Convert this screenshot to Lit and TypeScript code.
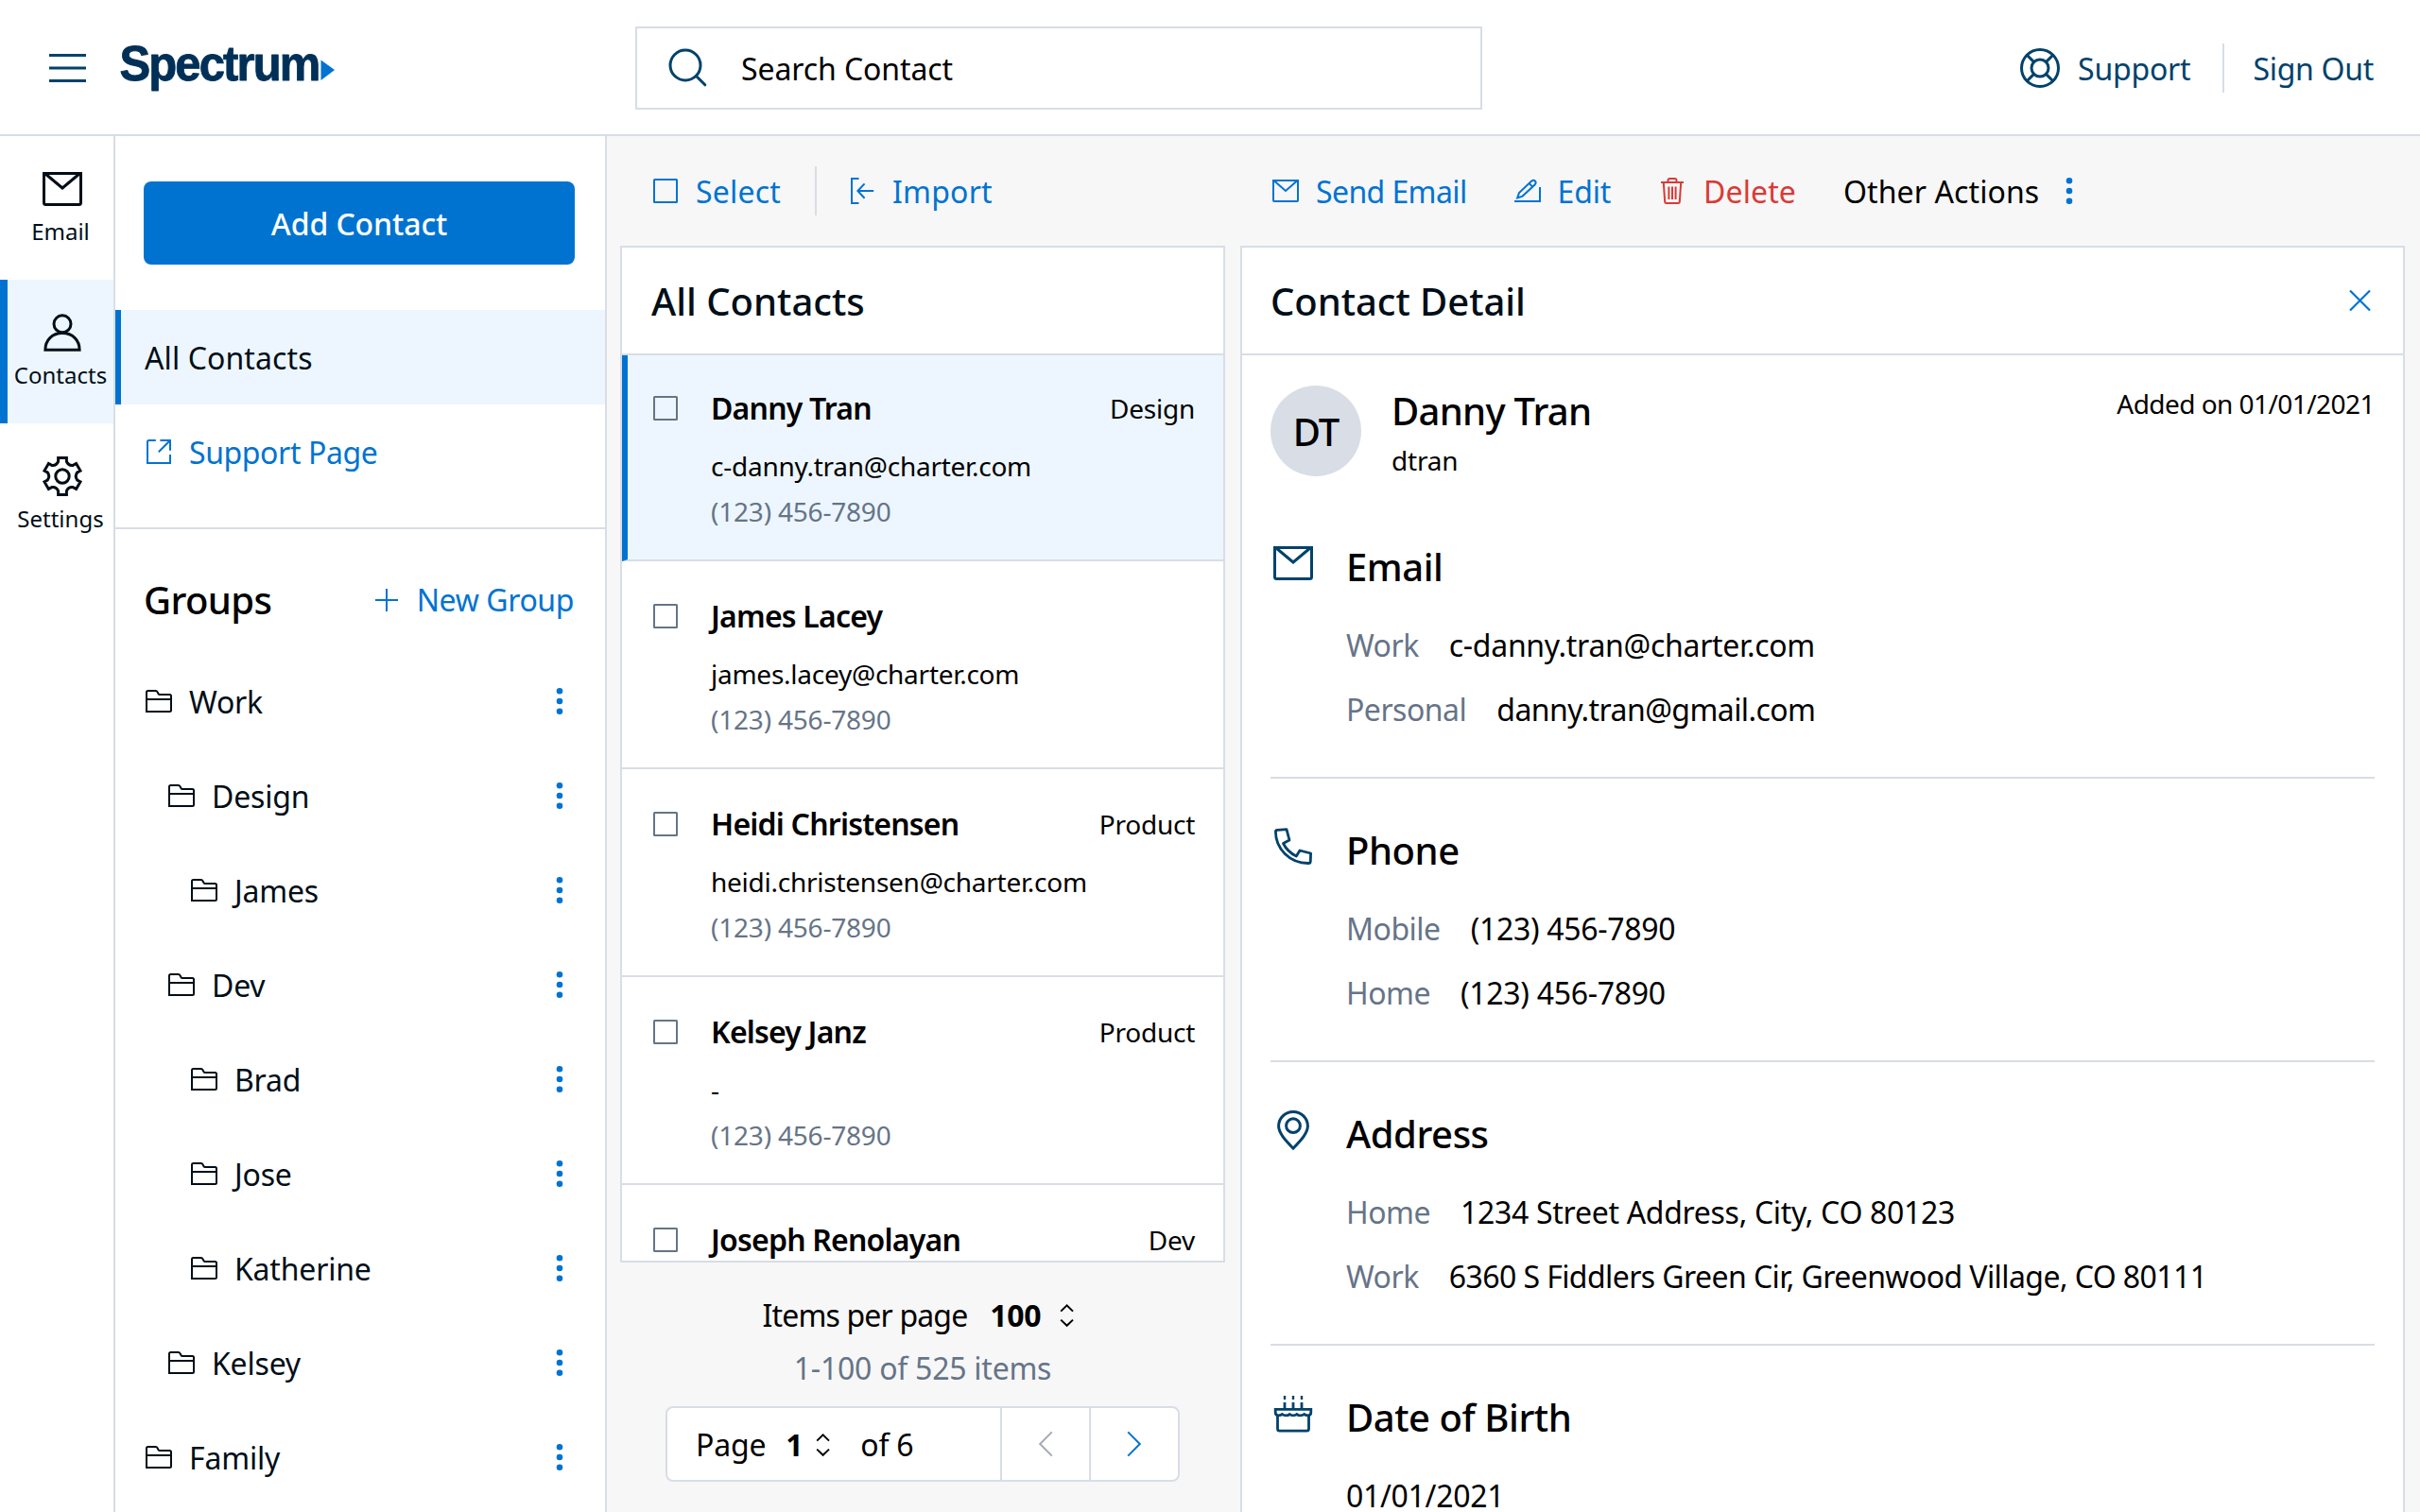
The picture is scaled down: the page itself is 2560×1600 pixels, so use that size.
import { LitElement, html, css, svg, nothing, type TemplateResult } from "lit";
import { customElement, property } from "lit/decorators.js";
import { classMap } from "lit/directives/class-map.js";

/** Outline of a six-toothed gear with concave arcs between the teeth. */
function gearPath(): string {
  const point = (angle: number, along: number, across: number) => {
    const x = 24 + along * Math.cos(angle) - across * Math.sin(angle);
    const y = 24 + along * Math.sin(angle) + across * Math.cos(angle);
    return `${x.toFixed(2)} ${y.toFixed(2)}`;
  };
  let d = "";
  for (let k = 0; k < 6; k++) {
    const a = -Math.PI / 2 + (k * Math.PI) / 3;
    d += k === 0 ? `M${point(a, 15.6, -4.4)}` : `A6.6 6.6 0 0 0 ${point(a, 15.6, -4.4)}`;
    d += `L${point(a, 19.4, -4.4)}L${point(a, 19.4, 4.4)}L${point(a, 15.6, 4.4)}`;
  }
  return `${d}A6.6 6.6 0 0 0 ${point(-Math.PI / 2, 15.6, -4.4)}Z`;
}

interface Glyph {
  box: number;
  stroke: number;
  art: TemplateResult<2>;
}

const glyphs: Record<string, Glyph> = {
  menu: { box: 48, stroke: 3, art: svg`<path d="M4 10.5H43M4 24H43M4 37.5H43"/>` },
  search: { box: 48, stroke: 3, art: svg`<circle cx="21" cy="21" r="16"/><path d="M32.5 32.5 41.8 41.8" stroke-linecap="round"/>` },
  lifebuoy: {
    box: 48,
    stroke: 3,
    art: svg`<circle cx="24" cy="24" r="19.5"/><circle cx="24" cy="24" r="9"/><path d="M10.5 10.5 17.6 17.6M37.5 10.5 30.4 17.6M10.5 37.5 17.6 30.4M37.5 37.5 30.4 30.4"/>`,
  },
  mail: { box: 48, stroke: 3, art: svg`<path d="M4.5 7.5H43.5V38.5Q43.5 40.5 41.5 40.5H6.5Q4.5 40.5 4.5 38.5Z"/><path d="M5.5 7.5 24 23 42.5 7.5"/>` },
  person: { box: 48, stroke: 3, art: svg`<circle cx="24" cy="14.8" r="9"/><path d="M5.9 42.2C5.9 32 13 24.6 24 24.6S42.1 32 42.1 42.2Z"/>` },
  gear: { box: 48, stroke: 3, art: svg`<path d=${gearPath()}/><circle cx="24" cy="24" r="7.2"/>` },
  phone: {
    box: 48,
    stroke: 2.8,
    art: svg`<path stroke-linejoin="round" d="M7 6.3 17 5.6 20 17 13.5 20.5Q18 29.5 27.3 34L31 28 42.6 31 42.3 39.5Q42.1 41.5 40 41.5C20 41.3 5.5 26 5.4 8Q5.4 6.5 7 6.3Z"/>`,
  },
  pin: { box: 48, stroke: 3, art: svg`<path d="M24 43.2C15.5 34.5 8.6 27 8.6 19.6A15.4 15.1 0 0 1 39.4 19.6C39.4 27 32.5 34.5 24 43.2Z"/><circle cx="24" cy="19.2" r="7.4"/>` },
  cake: {
    box: 48,
    stroke: 2.8,
    art: svg`<path d="M15 5V9M24 5V9M33 5V9" stroke-width="2.4"/><path d="M15 12V19M24 12V19M33 12V19"/><path d="M5.2 19.4H42.8V22.5Q42.8 25.8 39.4 25.8 36.8 25.8 35.6 24.6 34 25.8 31.6 25.8 29.2 25.8 27.8 24.6 26.2 25.8 24 25.8 21.8 25.8 20.2 24.6 18.8 25.8 16.4 25.8 14 25.8 12.4 24.6 11.2 25.8 8.6 25.8 5.2 25.8 5.2 22.5Z"/><path d="M7.5 25V40Q7.5 42.2 9.7 42.2H38.3Q40.5 42.2 40.5 40V25"/>`,
  },
  mailSmall: { box: 32, stroke: 2, art: svg`<path d="M3 5H29V26Q29 27 28 27H4Q3 27 3 26Z"/><path d="M3.5 5 16 16 28.5 5"/>` },
  external: { box: 32, stroke: 2, art: svg`<path d="M12.8 4H5.5Q4 4 4 5.5V28H28V19"/><path d="M17.4 4H28V14.8M28 4 15.8 16.2"/>` },
  plus: { box: 24, stroke: 2, art: svg`<path d="M12 0V24M0 12H24"/>` },
  folder: { box: 32, stroke: 2, art: svg`<path d="M3 27V6.5Q3 5 4.5 5H12.6Q14 5 14.5 6.2L15.6 8.2Q16 9 17 9H27.5Q29 9 29 10.5V25.5Q29 27 27.5 27ZM3 14H29"/>` },
  box: { box: 32, stroke: 2, art: svg`<rect x="4" y="4" width="24" height="24" rx="0.5"/>` },
  import: { box: 32, stroke: 2, art: svg`<path d="M12.5 3H5V29H12.5M11.5 16H28.2M18.6 8.4 11.4 16 18.6 23.8"/>` },
  edit: { box: 32, stroke: 2, art: svg`<path d="M2 27H29V12M5.2 23.4 7 18 20.2 5.6Q22.2 4 23.9 5.5 25.4 7.2 23.8 9.2L10.6 21.6ZM17.6 8 21.2 11.6"/>` },
  trash: { box: 32, stroke: 2, art: svg`<path d="M4 7H28M11.5 7V5Q11.5 3 13.5 3H18.5Q20.5 3 20.5 5V7M6.8 7 8.2 27.6Q8.3 29 9.7 29H22.3Q23.7 29 23.8 27.6L25.2 7M12.4 11.5V25M16 11.5V25M19.6 11.5V25"/>` },
  dots: { box: 32, stroke: 0, art: svg`<g fill="currentColor" stroke="none"><circle cx="16" cy="5.2" r="3.3"/><circle cx="16" cy="16" r="3.3"/><circle cx="16" cy="26.8" r="3.3"/></g>` },
  close: { box: 32, stroke: 2.2, art: svg`<path d="M6 5.5 27 26.5M27 5.5 6 26.5"/>` },
  updown: { box: 32, stroke: 2, art: svg`<path d="M9.2 11.6 15.6 5.4 22 11.6M9.2 20.6 15.6 26.8 22 20.6"/>` },
  left: { box: 32, stroke: 2, art: svg`<path d="M22.8 3.4 10.2 16 22.8 28.6"/>` },
  right: { box: 32, stroke: 2, art: svg`<path d="M9.2 3.4 21.8 16 9.2 28.6"/>` },
};

const icon = (name: string) => {
  const g = glyphs[name];
  return html`<svg class="icon" width=${g.box} height=${g.box} viewBox="0 0 ${g.box} ${g.box}" fill="none"
    stroke="currentColor" stroke-width=${g.stroke} aria-hidden="true">${g.art}</svg>`;
};

const base = css`
  :host {
    --blue: #0073d1;
    --navy: #00426b;
    --line: #d8dde6;
    --tint: #edf6fe;
    --muted: #667488;
    --ink: #000e18;
    display: block;
    box-sizing: border-box;
    font-family: "Noto Sans", sans-serif;
    font-size: 32px;
    letter-spacing: -0.2px;
    white-space: nowrap;
    color: #000;
  }
  * {
    box-sizing: border-box;
  }
  .icon {
    display: block;
    flex: none;
  }
  h2,
  h3 {
    margin: 0;
    font-size: 40px;
    font-weight: 500;
    letter-spacing: 0;
  }
`;

@customElement("app-header")
export class AppHeader extends LitElement {
  static styles = [
    base,
    css`
      :host {
        display: grid;
        grid-template-columns: 672px 896px 1fr;
        align-items: center;
        height: 144px;
        border-bottom: 2px solid var(--line);
        background: #fff;
        color: var(--navy);
      }
      .brand {
        display: flex;
        align-items: center;
        gap: 28px;
        padding-left: 48px;
        padding-top: 2px;
      }
      .logo {
        display: block;
        overflow: visible;
      }
      .search {
        display: flex;
        align-items: center;
        gap: 32px;
        height: 88px;
        margin-top: 2px;
        padding-left: 30px;
        border: 2px solid var(--line);
      }
      .search span {
        color: #000;
        letter-spacing: -0.1px;
      }
      .links {
        display: flex;
        align-items: center;
        justify-content: flex-end;
        padding: 2px 49px 0 0;
      }
      .support {
        display: flex;
        align-items: center;
        gap: 16px;
        padding-right: 34px;
      }
      .out {
        display: flex;
        align-items: center;
        height: 52px;
        padding-left: 30px;
        border-left: 2px solid var(--line);
        letter-spacing: -0.3px;
      }
    `,
  ];

  render() {
    return html`
      <div class="brand">
        ${icon("menu")}
        <svg class="logo" width="236" height="64" viewBox="0 0 236 64">
          <text x="2.5" y="45" textLength="211" lengthAdjust="spacingAndGlyphs" fill="#003057" stroke="#003057"
            stroke-width="0.9" stroke-linejoin="round" font-family="Liberation Sans, Arial, sans-serif"
            font-size="52" font-weight="700" letter-spacing="-2">Spectrum</text>
          <path d="M215.5 23.5 230 34 215.5 45Z" fill="#0073d1" />
        </svg>
      </div>
      <div class="search">${icon("search")}<span>Search Contact</span></div>
      <nav class="links">
        <span class="support">${icon("lifebuoy")}<span>Support</span></span>
        <span class="out">Sign Out</span>
      </nav>
    `;
  }
}

@customElement("nav-rail")
export class NavRail extends LitElement {
  static styles = [
    base,
    css`
      :host {
        width: 122px;
        border-right: 2px solid var(--line);
        background: #fff;
        color: var(--ink);
        font-size: 24px;
        letter-spacing: 0;
      }
      .item {
        display: flex;
        flex-direction: column;
        align-items: center;
        gap: 3px;
        height: 152px;
        padding: 32px 0 0 8px;
      }
      .item .icon {
        margin-left: 4px;
      }
      .label {
        line-height: 36px;
      }
      .item.active {
        padding-left: 0;
        border-left: 8px solid var(--blue);
        background: var(--tint);
      }
    `,
  ];

  private items = [
    { icon: "mail", label: "Email" },
    { icon: "person", label: "Contacts", active: true },
    { icon: "gear", label: "Settings" },
  ];

  render() {
    return this.items.map(
      (i) => html`<div class=${classMap({ item: true, active: !!i.active })}>
        ${icon(i.icon)}<span class="label">${i.label}</span>
      </div>`,
    );
  }
}

@customElement("group-panel")
export class GroupPanel extends LitElement {
  static styles = [
    base,
    css`
      :host {
        width: 520px;
        border-right: 2px solid var(--line);
        background: #fff;
        color: var(--ink);
      }
      .add {
        display: flex;
        align-items: center;
        justify-content: center;
        height: 88px;
        margin: 48px 32px 48px 30px;
        border-radius: 8px;
        background: var(--blue);
        color: #fff;
        font-weight: 500;
        letter-spacing: -0.1px;
      }
      .row {
        display: flex;
        align-items: center;
        gap: 16px;
        height: 100px;
        padding: 0 32px 0 30px;
      }
      .row.active {
        padding-left: 25px;
        border-left: 6px solid var(--blue);
        background: var(--tint);
        letter-spacing: 0.1px;
      }
      .row.link,
      .new,
      .more {
        color: var(--blue);
      }
      .links {
        padding-bottom: 30px;
        border-bottom: 2px solid var(--line);
      }
      .link {
        letter-spacing: -0.4px;
      }
      .head {
        display: flex;
        align-items: center;
        justify-content: space-between;
        height: 132px;
        padding: 17px 33px 0 30px;
      }
      .head h2 {
        color: #000;
        letter-spacing: -0.6px;
      }
      .new {
        display: flex;
        align-items: center;
        gap: 20px;
        letter-spacing: -0.4px;
      }
      .more {
        margin-left: auto;
      }
      .row.depth-1 {
        padding-left: 54px;
      }
      .row.depth-2 {
        padding-left: 78px;
      }
    `,
  ];

  private groups: [string, number][] = [
    ["Work", 0],
    ["Design", 1],
    ["James", 2],
    ["Dev", 1],
    ["Brad", 2],
    ["Jose", 2],
    ["Katherine", 2],
    ["Kelsey", 1],
    ["Family", 0],
  ];

  render() {
    return html`
      <div class="add">Add Contact</div>
      <div class="links">
        <div class="row active">All Contacts</div>
        <div class="row link">${icon("external")}<span>Support Page</span></div>
      </div>
      <div class="head">
        <h2>Groups</h2>
        <span class="new">${icon("plus")}<span>New Group</span></span>
      </div>
      ${this.groups.map(
        ([name, depth]) => html`<div class="row depth-${depth}">
          ${icon("folder")}<span>${name}</span><span class="more">${icon("dots")}</span>
        </div>`,
      )}
    `;
  }
}

@customElement("contact-row")
export class ContactRow extends LitElement {
  @property() name = "";
  @property() tag = "";
  @property() email = "";
  @property() phone = "";
  @property({ type: Boolean, reflect: true }) active = false;

  static styles = [
    base,
    css`
      :host {
        display: flex;
        gap: 32px;
        height: 220px;
        padding: 34px 30px 0;
        border-bottom: 2px solid var(--line);
      }
      :host([active]) {
        height: 218px;
        padding: 32px 30px 0 24px;
        border-left: 6px solid var(--blue);
        background: var(--tint);
      }
      .check {
        color: var(--muted);
        padding-top: 8px;
      }
      .body {
        flex: 1;
        font-size: 28px;
        line-height: 48px;
        letter-spacing: -0.25px;
      }
      .top {
        display: flex;
        justify-content: space-between;
        margin-bottom: 13px;
      }
      .name {
        font-size: 32px;
        font-weight: 600;
        letter-spacing: -0.8px;
      }
      .phone {
        color: var(--muted);
        letter-spacing: -0.2px;
      }
    `,
  ];

  render() {
    return html`
      <span class="check">${icon("box")}</span>
      <div class="body">
        <div class="top"><span class="name">${this.name}</span><span>${this.tag}</span></div>
        <div>${this.email}</div>
        <div class="phone">${this.phone}</div>
      </div>
    `;
  }
}

@customElement("contact-list")
export class ContactList extends LitElement {
  static styles = [
    base,
    css`
      :host {
        display: flex;
        flex-direction: column;
        width: 640px;
      }
      .toolbar {
        display: flex;
        align-items: center;
        height: 116px;
        padding-left: 32px;
        color: var(--blue);
      }
      .tool {
        display: flex;
        align-items: center;
        gap: 16px;
        letter-spacing: 0.2px;
      }
      .rule {
        width: 2px;
        height: 52px;
        margin: 0 32px 0 36px;
        background: var(--line);
      }
      .panel {
        height: 1076px;
        border: 2px solid var(--line);
        background: #fff;
        overflow: hidden;
      }
      .title {
        display: flex;
        align-items: center;
        height: 114px;
        padding: 1px 0 0 31px;
        border-bottom: 2px solid var(--line);
        color: var(--ink);
      }
      .pager {
        display: flex;
        flex-direction: column;
        align-items: center;
        padding-top: 28px;
        line-height: 56px;
      }
      .size {
        display: flex;
        align-items: center;
        letter-spacing: -0.85px;
      }
      .strong {
        font-weight: 700;
        margin: 0 12px 0 24px;
        letter-spacing: -0.3px;
      }
      .range {
        color: var(--muted);
        letter-spacing: -0.25px;
      }
      .pages {
        display: grid;
        grid-template-columns: 352px 94px 94px;
        width: 544px;
        height: 80px;
        margin-top: 12px;
        border: 2px solid var(--line);
        border-radius: 8px;
        background: #fff;
      }
      .page {
        display: flex;
        align-items: center;
        padding: 1px 0 0 30px;
      }
      .page .strong {
        margin: 0 6px 0 21px;
      }
      .total {
        margin-left: 23px;
      }
      .step {
        display: flex;
        align-items: center;
        justify-content: center;
        border-left: 2px solid var(--line);
        color: var(--blue);
      }
      .step.off {
        color: #a6aab2;
      }
    `,
  ];

  private contacts = [
    { name: "Danny Tran", tag: "Design", email: "c-danny.tran@charter.com", active: true },
    { name: "James Lacey", tag: "", email: "james.lacey@charter.com" },
    { name: "Heidi Christensen", tag: "Product", email: "heidi.christensen@charter.com" },
    { name: "Kelsey Janz", tag: "Product", email: "-" },
    { name: "Joseph Renolayan", tag: "Dev", email: "" },
  ];

  render() {
    return html`
      <div class="toolbar">
        <span class="tool">${icon("box")}<span>Select</span></span>
        <span class="rule"></span>
        <span class="tool">${icon("import")}<span>Import</span></span>
      </div>
      <div class="panel">
        <div class="title"><h2>All Contacts</h2></div>
        ${this.contacts.map(
          (c) => html`<contact-row .name=${c.name} .tag=${c.tag} .email=${c.email}
            .phone=${c.email ? "(123) 456-7890" : ""} ?active=${!!c.active}></contact-row>`,
        )}
      </div>
      <div class="pager">
        <div class="size"><span>Items per page</span><span class="strong">100</span>${icon("updown")}</div>
        <div class="range">1-100 of 525 items</div>
        <div class="pages">
          <div class="page">
            <span>Page</span><span class="strong">1</span>${icon("updown")}<span class="total">of 6</span>
          </div>
          <div class="step off">${icon("left")}</div>
          <div class="step">${icon("right")}</div>
        </div>
      </div>
    `;
  }
}

interface Section {
  icon: string;
  title: string;
  rows: { kind?: string; value: string; tight?: boolean }[];
}

@customElement("contact-detail")
export class ContactDetail extends LitElement {
  static styles = [
    base,
    css`
      :host {
        flex: 1;
        display: flex;
        flex-direction: column;
      }
      .toolbar {
        display: flex;
        flex: none;
        align-items: center;
        gap: 48px;
        height: 116px;
        padding-left: 32px;
        color: var(--blue);
      }
      .tool {
        display: flex;
        align-items: center;
        gap: 16px;
      }
      .send {
        letter-spacing: -0.6px;
      }
      .danger {
        gap: 17px;
        margin: 0 2px 0 1px;
        color: #da3a36;
        letter-spacing: 0.1px;
      }
      .other {
        letter-spacing: 0.1px;
      }
      .other span {
        color: #000;
      }
      .panel {
        flex: 1;
        min-height: 0;
        border: 2px solid var(--line);
        border-bottom: 0;
        background: #fff;
        overflow: hidden;
      }
      .title {
        display: flex;
        align-items: center;
        justify-content: space-between;
        height: 114px;
        padding: 0 30px;
        border-bottom: 2px solid var(--line);
        color: var(--blue);
      }
      .title h2 {
        padding-top: 1px;
        color: var(--ink);
        letter-spacing: -0.05px;
      }
      .content {
        padding: 0 30px;
      }
      .who {
        display: flex;
        gap: 32px;
        height: 148px;
        padding-top: 32px;
        font-size: 28px;
      }
      .avatar {
        display: flex;
        align-items: center;
        justify-content: center;
        width: 96px;
        height: 96px;
        padding-top: 1px;
        border-radius: 50%;
        background: var(--line);
        font-size: 40px;
        font-weight: 500;
        letter-spacing: -1px;
      }
      .id {
        flex: 1;
        margin-top: -3px;
        line-height: 45px;
      }
      .id h2 {
        line-height: 60px;
        letter-spacing: -0.7px;
      }
      .added {
        line-height: 38px;
        letter-spacing: -0.55px;
      }
      .section {
        display: flex;
        gap: 32px;
        height: 300px;
        padding-top: 48px;
        border-bottom: 2px solid var(--line);
      }
      .section > .icon {
        color: var(--navy);
      }
      .section h3 {
        padding-top: 1px;
        line-height: 53px;
        margin-bottom: 23px;
        letter-spacing: -0.45px;
      }
      .line {
        display: flex;
        gap: 32px;
        line-height: 68px;
        letter-spacing: -0.3px;
      }
      .tight {
        letter-spacing: -0.58px;
      }
      .kind {
        color: var(--muted);
        letter-spacing: -0.5px;
      }
    `,
  ];

  private sections: Section[] = [
    {
      icon: "mail",
      title: "Email",
      rows: [
        { kind: "Work", value: "c-danny.tran@charter.com" },
        { kind: "Personal", value: "danny.tran@gmail.com", tight: true },
      ],
    },
    {
      icon: "phone",
      title: "Phone",
      rows: [
        { kind: "Mobile", value: "(123) 456-7890" },
        { kind: "Home", value: "(123) 456-7890" },
      ],
    },
    {
      icon: "pin",
      title: "Address",
      rows: [
        { kind: "Home", value: "1234 Street Address, City, CO 80123" },
        { kind: "Work", value: "6360 S Fiddlers Green Cir, Greenwood Village, CO 80111", tight: true },
      ],
    },
    { icon: "cake", title: "Date of Birth", rows: [{ value: "01/01/2021" }] },
  ];

  render() {
    return html`
      <div class="toolbar">
        <span class="tool send">${icon("mailSmall")}<span>Send Email</span></span>
        <span class="tool">${icon("edit")}<span>Edit</span></span>
        <span class="tool danger">${icon("trash")}<span>Delete</span></span>
        <span class="tool other"><span>Other Actions</span>${icon("dots")}</span>
      </div>
      <div class="panel">
        <div class="title"><h2>Contact Detail</h2>${icon("close")}</div>
        <div class="content">
          <div class="who">
            <div class="avatar">DT</div>
            <div class="id"><h2>Danny Tran</h2>dtran</div>
            <span class="added">Added on 01/01/2021</span>
          </div>
          ${this.sections.map(
            (s) => html`<div class="section">
              ${icon(s.icon)}
              <div>
                <h3>${s.title}</h3>
                ${s.rows.map(
                  (r) => html`<div class="line">
                    ${r.kind ? html`<span class="kind">${r.kind}</span>` : nothing}
                    <span class=${classMap({ tight: !!r.tight })}>${r.value}</span>
                  </div>`,
                )}
              </div>
            </div>`,
          )}
        </div>
      </div>
    `;
  }
}

@customElement("app-root")
export class AppRoot extends LitElement {
  static styles = [
    base,
    css`
      :host {
        height: 1600px;
        background: #f7f7f7;
        overflow: hidden;
      }
      .body {
        display: flex;
        height: 1456px;
        overflow: hidden;
      }
      .main {
        flex: 1;
        display: flex;
        gap: 16px;
        padding: 0 16px 0 14px;
      }
    `,
  ];

  render() {
    return html`
      <app-header></app-header>
      <div class="body">
        <nav-rail></nav-rail>
        <group-panel></group-panel>
        <main class="main">
          <contact-list></contact-list>
          <contact-detail></contact-detail>
        </main>
      </div>
    `;
  }
}
